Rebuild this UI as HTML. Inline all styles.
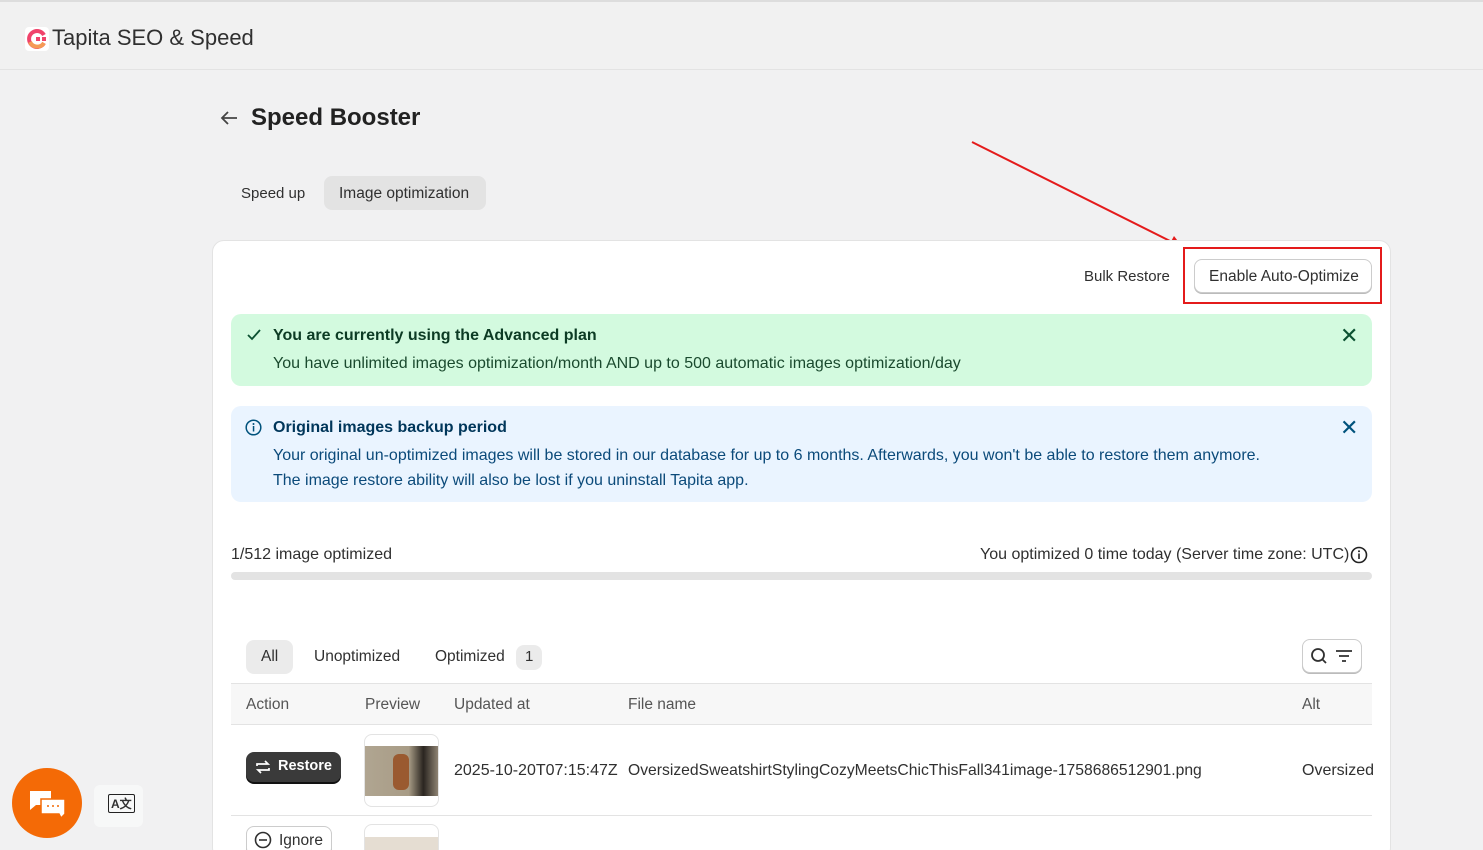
<!DOCTYPE html>
<html><head><meta charset="utf-8"><style>
*{box-sizing:border-box;margin:0;padding:0}
html,body{width:1483px;height:850px;overflow:hidden}
body{background:#f1f1f2;font-family:"Liberation Sans",sans-serif;color:#303030;position:relative}
.abs{position:absolute}
.hdr{left:0;top:0;width:1483px;height:70px;border-top:2px solid #ddd;border-bottom:1px solid #e3e3e3;background:#f1f1f1}
.card{left:212px;top:240px;width:1179px;height:620px;background:#fff;border-radius:12px;border:1px solid #e3e3e3}
.t14{font-size:15px}
.t16{font-size:16px}
.btn{border:1px solid #ccc;border-radius:8px;background:#fff;box-shadow:0 1px 0 #bbb}
</style></head><body>
<div class="abs hdr">
  <svg class="abs" style="left:25px;top:25px" width="24" height="24" viewBox="0 0 24 24"><rect width="24" height="24" rx="4" fill="#fff"/><path d="M19 8A8 8 0 1 0 19 16" stroke="#f0436b" stroke-width="4" fill="none"/><path d="M5 15A8 8 0 0 0 19 16" stroke="#f59a55" stroke-width="4" fill="none"/><rect x="11" y="10" width="4" height="4" fill="#f0436b"/><rect x="17" y="10" width="4" height="4" fill="#f0436b"/></svg>
  <div class="abs" style="left:52px;top:23px;font-size:22px;color:#303030">Tapita SEO &amp; Speed</div>
</div>
<svg class="abs" style="left:219px;top:110px" width="20" height="16"><path d="M18 8H3M9 2L3 8l6 6" stroke="#444" stroke-width="1.8" fill="none"/></svg>
<div class="abs" style="left:251px;top:104px;font-size:24px;font-weight:bold;color:#222">Speed Booster</div>
<div class="abs t14" style="left:241px;top:185px">Speed up</div>
<div class="abs t14" style="left:324px;top:176px;width:162px;height:34px;background:#e3e3e3;border-radius:8px;padding:9px 0 0 15px;font-size:15.5px">Image optimization</div>

<svg class="abs" style="left:960px;top:135px" width="240" height="120"><line x1="12" y1="7" x2="216" y2="109" stroke="#e41b1b" stroke-width="2"/><polygon points="224,114 208,112 214,101" fill="#e41b1b"/></svg>

<div class="abs card"></div>
<div class="abs t14" style="left:1084px;top:268px">Bulk Restore</div>
<div class="abs btn t14" style="left:1194px;top:259px;width:178px;height:34px;padding:8px 0 0 14px;font-size:15.5px">Enable Auto-Optimize</div>
<div class="abs" style="left:1183px;top:247px;width:199px;height:57px;border:2px solid #e41b1b"></div>

<div class="abs" style="left:231px;top:314px;width:1141px;height:72px;background:#d3fadf;border-radius:10px"></div>
<svg class="abs" style="left:246px;top:328px" width="16" height="14"><path d="M2 7l4 4 8-9" stroke="#0c5132" stroke-width="1.8" fill="none"/></svg>
<div class="abs t16" style="left:273px;top:327px;font-weight:bold;color:#0c3b24">You are currently using the Advanced plan</div>
<div class="abs t16" style="left:273px;top:355px;color:#1a4a2e">You have unlimited images optimization/month AND up to 500 automatic images optimization/day</div>
<div class="abs" style="left:1340px;top:323px;font-size:22px;color:#0c5132">✕</div>

<div class="abs" style="left:231px;top:406px;width:1141px;height:96px;background:#eaf4ff;border-radius:10px"></div>
<svg class="abs" style="left:245px;top:419px" width="17" height="17"><circle cx="8.5" cy="8.5" r="7.3" fill="none" stroke="#00527c" stroke-width="1.5"/><rect x="7.8" y="7" width="1.5" height="5.5" fill="#00527c"/><circle cx="8.5" cy="5" r="1" fill="#00527c"/></svg>
<div class="abs t16" style="left:273px;top:419px;font-weight:bold;color:#00365a">Original images backup period</div>
<div class="abs t16" style="left:273px;top:447px;color:#0b4a7a">Your original un-optimized images will be stored in our database for up to 6 months. Afterwards, you won't be able to restore them anymore.</div>
<div class="abs t16" style="left:273px;top:472px;color:#0b4a7a">The image restore ability will also be lost if you uninstall Tapita app.</div>
<div class="abs" style="left:1340px;top:415px;font-size:22px;color:#00527c">✕</div>

<div class="abs t16" style="left:231px;top:546px">1/512 image optimized</div>
<div class="abs t16" style="left:980px;top:546px">You optimized 0 time today (Server time zone: UTC)</div>
<svg class="abs" style="left:1350px;top:546px" width="18" height="18"><circle cx="9" cy="9" r="7.5" fill="none" stroke="#222" stroke-width="1.6"/><rect x="8.2" y="7.5" width="1.6" height="5.5" fill="#222"/><circle cx="9" cy="5.2" r="1" fill="#222"/></svg>
<div class="abs" style="left:231px;top:572px;width:1141px;height:8px;background:#e3e3e3;border-radius:4px"></div>

<div class="abs t14" style="left:246px;top:640px;width:47px;height:34px;background:#ebebeb;border-radius:8px;padding:8px 0 0 15px;font-size:15.5px">All</div>
<div class="abs t14" style="left:314px;top:648px;font-size:15.5px">Unoptimized</div>
<div class="abs t14" style="left:435px;top:648px;font-size:15.5px">Optimized</div>
<div class="abs t14" style="left:516px;top:645px;width:26px;height:25px;background:#ebebeb;border-radius:8px;padding:3px 0 0 9px">1</div>
<div class="abs btn" style="left:1302px;top:639px;width:60px;height:34px"></div>
<svg class="abs" style="left:1310px;top:647px" width="46" height="18"><circle cx="8" cy="8" r="6" fill="none" stroke="#303030" stroke-width="1.8"/><line x1="12.5" y1="12.5" x2="16" y2="16" stroke="#303030" stroke-width="1.8"/><path d="M26 4h16M29 9h10M32 14h4" stroke="#303030" stroke-width="1.8"/></svg>

<div class="abs" style="left:231px;top:683px;width:1141px;height:42px;background:#f7f7f7;border-top:1px solid #e3e3e3;border-bottom:1px solid #e3e3e3"></div>
<div class="abs t14" style="left:246px;top:696px;color:#555;font-size:15.5px">Action</div>
<div class="abs t14" style="left:365px;top:696px;color:#555;font-size:15.5px">Preview</div>
<div class="abs t14" style="left:454px;top:696px;color:#555;font-size:15.5px">Updated at</div>
<div class="abs t14" style="left:628px;top:696px;color:#555;font-size:15.5px">File name</div>
<div class="abs t14" style="left:1302px;top:696px;color:#555;font-size:15.5px">Alt</div>

<div class="abs" style="left:246px;top:752px;width:95px;height:30px;background:#3a3a3a;border-radius:8px;color:#fff;font-weight:bold;font-size:14.5px;padding:6px 0 0 32px;box-shadow:0 2px 0 #111">Restore</div>
<svg class="abs" style="left:254px;top:758px" width="18" height="18"><path d="M3 8V6h11l-3-3M15 10v2H4l3 3" stroke="#fff" stroke-width="1.7" fill="none"/></svg>
<div class="abs" style="left:364px;top:734px;width:75px;height:73px;border:1px solid #e3e3e3;border-radius:8px;overflow:hidden;background:#fff">
  <div style="margin-top:11px;height:50px;background:linear-gradient(90deg,#b0a591 0%,#a89c86 60%,#2a2520 80%,#8d8272 100%)"><div style="position:relative;left:28px;top:8px;width:16px;height:36px;background:#9a5a30;border-radius:6px"></div></div>
</div>
<div class="abs t16" style="left:454px;top:762px">2025-10-20T07:15:47Z</div>
<div class="abs" style="left:628px;top:762px;font-size:15.7px">OversizedSweatshirtStylingCozyMeetsChicThisFall341image-1758686512901.png</div>
<div class="abs t16" style="left:1302px;top:762px">Oversized</div>
<div class="abs" style="left:231px;top:815px;width:1141px;height:1px;background:#e3e3e3"></div>

<div class="abs btn t14" style="left:246px;top:826px;width:86px;height:30px;padding:5px 0 0 32px;font-size:15.5px">Ignore</div>
<svg class="abs" style="left:254px;top:831px" width="18" height="18"><circle cx="9" cy="9" r="7.5" fill="none" stroke="#303030" stroke-width="1.6"/><line x1="5" y1="9" x2="13" y2="9" stroke="#303030" stroke-width="1.6"/></svg>
<div class="abs" style="left:364px;top:824px;width:75px;height:40px;border:1px solid #e3e3e3;border-radius:8px;background:#fff;overflow:hidden"><div style="margin-top:12px;height:30px;background:#e5ddd2"></div></div>

<div class="abs" style="left:12px;top:768px;width:70px;height:70px;border-radius:50%;background:#f46a06"></div>
<svg class="abs" style="left:29px;top:790px" width="38" height="30"><path d="M1 1h21v14H7l-6 5z" fill="#fff"/><path d="M12 9h24v15l-4 4-2-4H12z" fill="#fff" stroke="#f46a06" stroke-width="1.5"/><circle cx="19" cy="16" r="1" fill="#f46a06"/><circle cx="24" cy="16" r="1" fill="#f46a06"/><circle cx="29" cy="16" r="1" fill="#f46a06"/></svg>
<div class="abs" style="left:94px;top:785px;width:49px;height:42px;background:#f7f8f8;border-radius:6px"></div>
<div class="abs" style="left:108px;top:794px;font-size:12px;font-weight:bold;border:1.5px solid #222;border-radius:2px;padding:0 2px">A文</div>
</body></html>
